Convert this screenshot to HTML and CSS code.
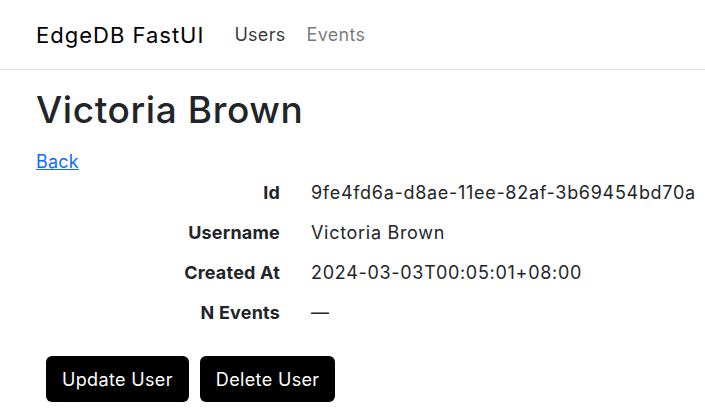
FILE: index.html
```html
<!DOCTYPE html>
<html lang="en">
<head>
<meta charset="utf-8">
<title>Victoria Brown</title>
<link rel="stylesheet" href="styles.css">
</head>
<body>
<nav class="navbar">
  <a class="brand" href="#">EdgeDB FastUI</a>
  <a class="nav-link active" href="#">Users</a>
  <a class="nav-link" href="#">Events</a>
</nav>
<main class="container">
  <h1 class="title">Victoria Brown</h1>
  <a class="back" href="#">Back</a>
  <div class="details">
    <div class="label">Id</div><div class="value">9fe4fd6a-d8ae-11ee-82af-3b69454bd70a</div>
    <div class="label">Username</div><div class="value">Victoria Brown</div>
    <div class="label">Created At</div><div class="value">2024-03-03T00:05:01+08:00</div>
    <div class="label">N Events</div><div class="value">—</div>
  </div>
  <div class="actions">
    <button class="btn">Update User</button>
    <button class="btn">Delete User</button>
  </div>
</main>
</body>
</html>
```
FILE: styles.css
```css
* { box-sizing: border-box; }
html, body { margin: 0; padding: 0; background: #fff; }
body {
  font-family: Inter, "Noto Sans", sans-serif;
  font-size: 18px;
  color: #212529;
  overflow: hidden;
}
.navbar {
  display: flex;
  align-items: center;
  height: 70px;
  padding: 0 36px;
  border-bottom: 1px solid #dee2e6;
}
.brand {
  font-size: 22px;
  letter-spacing: 1px;
  color: #000;
  text-decoration: none;
  margin-right: 30px;
}
.nav-link {
  color: rgba(0,0,0,0.55);
  letter-spacing: 0.3px;
  text-decoration: none;
  margin-right: 21px;
}
.nav-link.active { color: rgba(0,0,0,0.8); }
.container { padding: 0 36px; }
.title {
  font-size: 37px;
  font-weight: 500;
  letter-spacing: 0.6px;
  margin: 18px 0 19px;
  line-height: 1.2;
}
.back {
  display: inline-block;
  color: #0d6efd;
  text-decoration: underline;
  letter-spacing: 0.2px;
  line-height: 16px;
}
.details {
  display: grid;
  grid-template-columns: 244px auto;
  column-gap: 31px;
  grid-auto-rows: 40px;
  align-items: center;
}
.label { text-align: right; font-weight: 700; letter-spacing: 0.2px; }
.value { white-space: nowrap; letter-spacing: 0.7px; }
.actions {
  display: flex;
  gap: 11px;
  padding: 24px 10px;
}
.btn {
  font-family: inherit;
  font-size: 18px;
  letter-spacing: 0.35px;
  color: #fff;
  background: #000;
  border: 0;
  border-radius: 6px;
  height: 46px;
  padding: 0 16px;
}
```
